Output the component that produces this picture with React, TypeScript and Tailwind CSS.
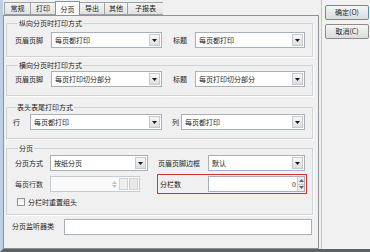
import React from "react";

// ─── small widgets ────────────────────────────────────────────────────────────

function Arrow({ up, color = "#1a1a1a" }: { up?: boolean; color?: string }) {
  return (
    <svg width="5" height="3" viewBox="0 0 5 3" aria-hidden>
      <path d={up ? "M0 3h5L2.5 0z" : "M0 0h5L2.5 3z"} fill={color} />
    </svg>
  );
}

function Select({ value, className }: { value: string; className: string }) {
  return (
    <div className={`flex h-4 items-stretch border border-[#a9b0b8] bg-white ${className}`}>
      <span className="flex-1 truncate pl-[3px] leading-[14px]">{value}</span>
      <span className="m-px flex w-[11px] items-center justify-center border border-[#c5cad0] bg-gradient-to-b from-[#f7f7f7] to-[#dedede]">
        <Arrow />
      </span>
    </div>
  );
}

function Group({ title, children, className }: { title: string; children: React.ReactNode; className: string }) {
  return (
    <fieldset className={`border border-[#cfd3d6] shadow-[1px_1px_0_#ffffff] ${className}`}>
      <legend className="ml-[3px] px-px leading-[8px]">{title}</legend>
      {children}
    </fieldset>
  );
}

function Tab({ label, active, className }: { label: string; active?: boolean; className: string }) {
  return active ? (
    <div className={`-mt-px mb-[-1px] flex h-[15px] items-center justify-center border border-b-0 border-[#8e9296] bg-[#fbfbfb] ${className}`}>
      {label}
    </div>
  ) : (
    <div className={`flex h-[13px] items-center justify-center border border-r-0 border-[#9ea2a6] bg-gradient-to-b from-[#f4f4f4] to-[#e1e1e1] ${className}`}>
      {label}
    </div>
  );
}

function Button({ label, primary }: { label: string; primary?: boolean }) {
  return (
    <div
      className={`flex h-[15px] w-[44px] items-center justify-center rounded-[2px] border bg-gradient-to-b from-[#f5f5f5] to-[#dcdcdc] ${
        primary ? "border-[#5a8fc0]" : "border-[#8c8c8c]"
      }`}
    >
      {label}
    </div>
  );
}

// ─── dialog ──────────────────────────────────────────────────────────────────

export default function App() {
  return (
    <div className="flex h-[252px] w-[370px] border-b-[3px] border-l-[3px] border-b-[#5d6166] border-l-[#bccfe3] bg-[#f0f0f0] font-['Noto_Sans_CJK_SC',sans-serif] text-[7px] text-[#1b1b1b]">
      {/* left: tabbed pane */}
      <div className="flex w-[316px] flex-col pt-[2px]">
        <div className="flex items-end pl-px">
          <Tab label="常规" className="w-[26px]" />
          <Tab label="打印" className="w-[25px]" />
          <Tab label="分页" active className="w-[25px]" />
          <Tab label="导出" className="w-[24px] border-l-0" />
          <Tab label="其他" className="w-[23px]" />
          <Tab label="子报表" className="w-[36px] border-r" />
        </div>

        <div className="flex flex-1 flex-col border border-[#8e9296] bg-[#f0f0f0] pb-[5px] pl-[2px] pr-[5px] pt-[3px]">
          <Group title="纵向分页时打印方式" className="pb-[8px] pl-[8px] pt-[5px]">
            <div className="flex items-center">
              <span className="w-[36px]">页眉页脚</span>
              <Select value="每页都打印" className="w-[111px]" />
              <span className="ml-[11px] w-[22px]">标题</span>
              <Select value="每页都打印" className="w-[110px]" />
            </div>
          </Group>

          <Group title="横向分页时打印方式" className="mt-[4px] pb-[8px] pl-[8px] pt-[2px]">
            <div className="flex items-center">
              <span className="w-[36px]">页眉页脚</span>
              <Select value="每页打印切分部分" className="w-[111px]" />
              <span className="ml-[11px] w-[22px]">标题</span>
              <Select value="每页打印切分部分" className="w-[110px]" />
            </div>
          </Group>

          <Group title="表头表尾打印方式" className="mt-[7px] pb-[8px] pl-[6px] pt-[3px]">
            <div className="flex items-center">
              <span className="w-[17px]">行</span>
              <Select value="每页都打印" className="w-[132px]" />
              <span className="ml-[10px] w-[9px]">列</span>
              <Select value="每页都打印" className="w-[124px]" />
            </div>
          </Group>

          <Group title="分页" className="mt-[5px] pb-[6px] pl-[8px] pt-[3px]">
            <div className="flex items-center">
              <span className="w-[35px]">分页方式</span>
              <Select value="按纸分页" className="w-[98px]" />
              <span className="ml-[10px] w-[50px]">页眉页脚边框</span>
              <Select value="默认" className="w-[97px]" />
            </div>

            <div className="mt-[5px] flex items-center">
              <span className="w-[35px] text-[#333]">每页行数</span>
              <div className="flex h-4 w-[90px] items-stretch border border-[#c6cbd0] bg-[#fafafa]">
                <span className="flex-1" />
                <span className="flex w-[7px] flex-col items-center justify-center gap-px">
                  <Arrow up color="#c2c2c2" />
                  <Arrow color="#c2c2c2" />
                </span>
                <span className="my-px ml-px w-[9px] border border-[#cdd1d5] bg-[#eeeeee]" />
                <span className="m-px w-[9px] border border-[#cdd1d5] bg-[#e8e8e8]" />
              </div>
              <div className="-my-[2px] ml-[17px] flex items-center border-[1.5px] border-[#dc2f35] py-px pl-[2px] pr-px">
                <span className="w-[48px]">分栏数</span>
                <div className="flex h-4 w-[97px] items-stretch border border-[#a9b0b8] bg-white">
                  <span className="flex-1 pr-px text-right leading-[14px]">0</span>
                  <span className="flex w-[7px] flex-col border-l border-[#c5cad0] bg-[#ececec]">
                    <span className="flex flex-1 items-center justify-center border-b border-[#c5cad0]">
                      <Arrow up color="#666" />
                    </span>
                    <span className="flex flex-1 items-center justify-center">
                      <Arrow color="#666" />
                    </span>
                  </span>
                </div>
              </div>
            </div>

            <label className="mt-[5px] flex items-center">
              <span className="ml-[2px] h-[8px] w-[8px] border border-[#8f959b] bg-gradient-to-b from-[#e9ecef] to-[#ffffff]" />
              <span className="ml-[3px]">分栏时重置组头</span>
            </label>
          </Group>

          <div className="mt-[4px] flex items-center pl-[6px]">
            <span className="w-[52px]">分页监听器类</span>
            <div className="h-4 w-[248px] border border-[#a9b0b8] bg-white" />
          </div>
        </div>
      </div>

      {/* right: buttons */}
      <div className="ml-[2px] flex flex-1 flex-col gap-[4px] border-l border-[#b9c8d6] bg-[#f2f2f2] pl-[3px] pt-[5px]">
        <Button label="确定(O)" primary />
        <Button label="取消(C)" />
      </div>
    </div>
  );
}
